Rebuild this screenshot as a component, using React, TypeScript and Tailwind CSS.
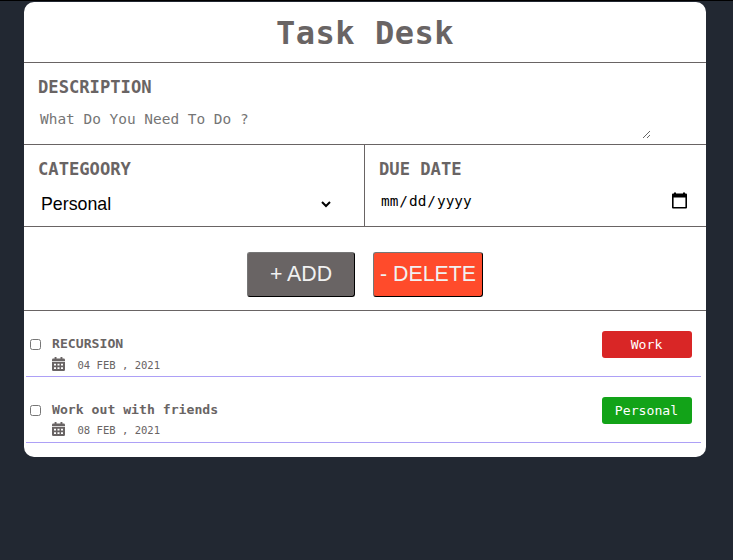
import React from "react";

const mono = "font-['DejaVu_Sans_Mono','Liberation_Mono',monospace]";

type Task = { title: string; date: string; tag: string; color: string; dateClass: string };

const tasks: Task[] = [
  { title: "RECURSION", date: "04 FEB , 2021", tag: "Work", color: "bg-[#d92626]", dateClass: "mt-[5px]" },
  { title: "Work out with friends", date: "08 FEB , 2021", tag: "Personal", color: "bg-[#12a318]", dateClass: "mt-1" },
];

function CalendarIcon() {
  return (
    <svg width="13" height="14" viewBox="0 0 13 14" className="-mt-0.5" fill="currentColor">
      <path d="M2.6 0h1.9v1.6h4V0h1.9v1.6h1.3A1.3 1.3 0 0 1 13 2.9V4.3H0V2.9a1.3 1.3 0 0 1 1.3-1.3h1.3z" />
      <path
        fillRule="evenodd"
        d="M0 5h13v7.7a1.3 1.3 0 0 1-1.3 1.3H1.3A1.3 1.3 0 0 1 0 12.7zM2 6.8v1.7h2V6.8zM5.5 6.8v1.7h2V6.8zM9 6.8v1.7h2V6.8zM2 10.2v1.7h2v-1.7zM5.5 10.2v1.7h2v-1.7zM9 10.2v1.7h2v-1.7z"
      />
    </svg>
  );
}

function TaskRow({ task }: { task: Task }) {
  return (
    <li className="flex h-[66px] items-start border-b border-[#ada0f6] pt-5">
      <input type="checkbox" className="ml-1 mt-2 h-[11px] w-[11px] shrink-0" />
      <div className="ml-[11px] flex-1 pt-[5px]">
        <p className="h-4 whitespace-pre text-[13.15px] font-bold leading-4">{task.title}</p>
        <p className={`flex h-4 items-center ${task.dateClass}`}>
          <CalendarIcon />
          <span className="ml-[12.5px] whitespace-pre text-[10.55px] leading-4">{task.date}</span>
        </p>
      </div>
      <span className={`mr-[9px] h-[27px] w-[90px] rounded-[3px] pr-px text-center text-[13.15px] leading-[27px] text-white ${task.color}`}>
        {task.tag}
      </span>
    </li>
  );
}

export default function App() {
  return (
    <main className={`h-[560px] w-[733px] overflow-hidden border-t border-black bg-[#222832] pl-6 pt-px text-[#696464] ${mono}`}>
      <section className="h-[455px] w-[682px] overflow-hidden rounded-[10px] bg-white">
        <h1 className="h-[61px] border-b border-[#696464] text-center text-[32px] font-bold leading-[63px] tracking-[0.5px]">Task Desk</h1>
        <div className="h-[82px] border-b border-[#696464] pl-[14px] pt-[14px]">
          <label className="block h-5 text-[17.15px] font-bold leading-5">DESCRIPTION</label>
          <textarea
            placeholder="What Do You Need To Do ?"
            className="mt-[10px] block h-[32px] w-[613px] overflow-hidden px-[2px] pt-[3px] text-[14.45px] leading-[18px] outline-none placeholder:text-[#757575]"
          />
        </div>
        <div className="flex h-[82px] border-b border-[#696464]">
          <div className="w-[341px] border-r border-[#696464] pl-[14px] pt-[14px]">
            <label className="block h-5 text-[17.15px] font-bold leading-5">CATEGOORY</label>
            <select className="-ml-px mt-[13px] block h-6 w-[297px] bg-white font-['Liberation_Sans',Arial,sans-serif] text-[17.8px] leading-6 text-black outline-none">
              <option>Personal</option>
            </select>
          </div>
          <div className="flex-1 pl-[14px] pt-[14px]">
            <label className="block h-5 text-[17.15px] font-bold leading-5">DUE DATE</label>
            <div className="mt-[10px] flex items-start">
              <input
                type="date"
                className="block h-6 w-[293px] pl-px text-[14.4px] leading-6 text-black outline-none [&::-webkit-calendar-picker-indicator]:hidden"
              />
              <svg width="15" height="17" viewBox="0 0 15 17" className="mt-[3px]" fill="none">
                <path d="M2 0.5h2v1h7v-1h2v1h1a1 1 0 0 1 1 1V15.5a1 1 0 0 1-1 1H1a1 1 0 0 1-1-1V2.5a1 1 0 0 1 1-1h1zM1.6 5.5V15h11.8V5.5z" fill="black" fillRule="evenodd" />
              </svg>
            </div>
          </div>
        </div>
        <div className="flex h-[84px] gap-[18px] border-b border-[#696464] pl-[223px] pt-[25px] font-['Liberation_Sans',Arial,sans-serif] text-[21.3px] text-[#f1f1f1]">
          <button className="h-[45px] w-[108px] whitespace-nowrap rounded-[3px] border border-b-black border-l-[#767676] border-r-black border-t-[#767676] bg-[#696464] pb-px leading-[40px]">+ ADD</button>
          <button className="h-[45px] w-[110px] whitespace-nowrap rounded-[3px] border border-b-black border-l-[#767676] border-r-black border-t-[#767676] bg-[#ff4b2b] pb-px leading-[40px]">- DELETE</button>
        </div>
        <ul className="ml-[2px] w-[675px]">
          {tasks.map((task) => (
            <TaskRow key={task.title} task={task} />
          ))}
        </ul>
      </section>
    </main>
  );
}
